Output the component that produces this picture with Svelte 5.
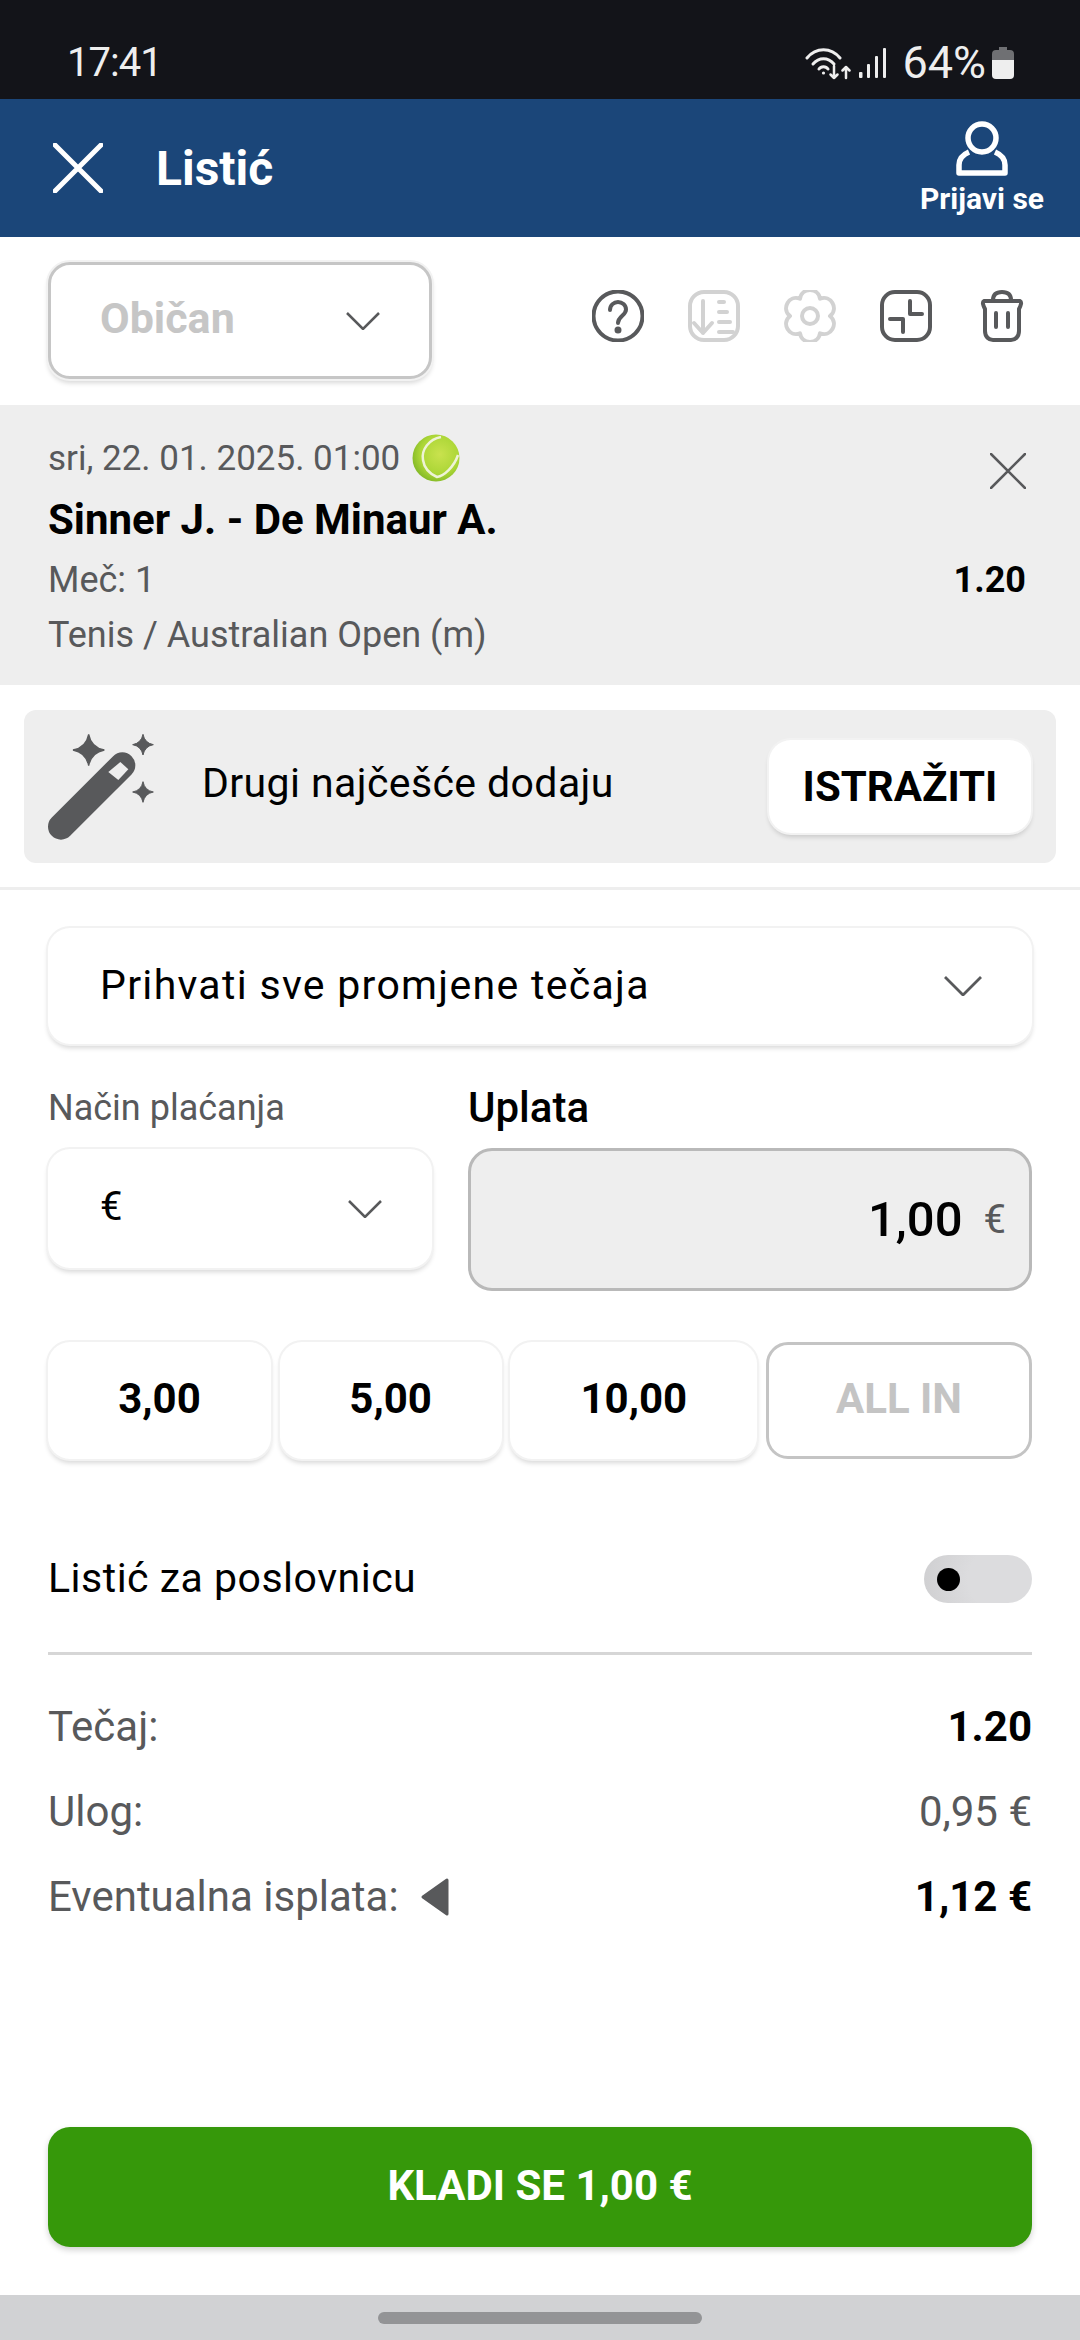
<script>
  const amounts = [
    { label: '3,00', width: 223 },
    { label: '5,00', width: 222 },
    { label: '10,00', width: 247 }
  ];

  // six soft lobes round the centre of a 52 box
  function gearPath(cx, cy, inner, outer) {
    const pt = (deg, r) => {
      const a = (deg * Math.PI) / 180;
      return (cx + r * Math.cos(a)).toFixed(1) + ' ' + (cy + r * Math.sin(a)).toFixed(1);
    };
    let d = 'M' + pt(0, inner);
    for (let i = 0; i < 6; i++) {
      const s = i * 60;
      d += ' C' + pt(s + 14, outer) + ' ' + pt(s + 46, outer) + ' ' + pt(s + 60, inner);
    }
    return d + 'Z';
  }
  const gear = gearPath(26, 26, 20, 30);

  function star(x, y, r) {
    const k = r * 0.16;
    return `M${x} ${y - r}Q${x + k} ${y - k} ${x + r} ${y}Q${x + k} ${y + k} ${x} ${y + r}Q${x - k} ${y + k} ${x - r} ${y}Q${x - k} ${y - k} ${x} ${y - r}Z`;
  }
</script>

<div class="screen">
  <div class="status">
    <span class="time">17:41</span>
    <div class="status-right">
      <svg class="wifi" width="46" height="34" viewBox="0 0 46 34" fill="none" stroke="#eee" stroke-width="3" stroke-linecap="round" stroke-linejoin="round">
        <path d="M2 12C11 1 26 1 35 12" />
        <path d="M8 18C14 11 23 11 29 18" />
        <path d="M14 23C16 20 21 20 23 23" />
        <circle cx="18.500" cy="27" r="1.600" fill="#eee" stroke="none" />
        <path d="M29 20V32M25.500 28.500L29 32L32.500 28.500" stroke-width="2.500" />
        <path d="M41 32V21M37.500 24.500L41 21L44.500 24.500" stroke-width="2.500" />
      </svg>
      <svg class="signal" width="28" height="30" viewBox="0 0 28 30" fill="#eee">
        <rect x="0" y="24" width="3.500" height="6" rx="1" />
        <rect x="8" y="16" width="3" height="14" rx="1" />
        <rect x="16" y="8" width="3" height="22" rx="1" />
        <rect x="24" y="0" width="3" height="30" rx="1" />
      </svg>
      <span class="battery-text">64%</span>
      <svg class="battery" width="22" height="32" viewBox="0 0 22 32">
        <path d="M7 0h8v3h3a4 4 0 0 1 4 4v6H0V7a4 4 0 0 1 4-4h3z" fill="#6f7073" />
        <path d="M0 13h22v15a4 4 0 0 1-4 4H4a4 4 0 0 1-4-4z" fill="#eee" />
      </svg>
    </div>
  </div>

  <header class="topbar">
    <svg class="close-main" width="50" height="50" viewBox="0 0 50 50" fill="none" stroke="#fff" stroke-width="5" stroke-linecap="round">
      <path d="M2 2L48 48M48 2L2 48" />
    </svg>
    <h1>Listić</h1>
    <div class="login">
      <svg width="54" height="56" viewBox="0 0 54 56" fill="none" stroke="#fff" stroke-width="5.500" stroke-linejoin="round">
        <circle cx="27" cy="17" r="14" />
        <path d="M14 31C7 34 4 39 4 44V52H50V44C50 39 47 34 40 31" />
      </svg>
      <span>Prijavi se</span>
    </div>
  </header>

  <div class="toolbar">
    <div class="select ticket-type">
      <span>Običan</span>
      <svg class="chev" width="34" height="18" viewBox="0 0 34 18" fill="none" stroke="#58595b" stroke-width="2.500"><path d="M1 1L17 17L33 1" /></svg>
    </div>
    <div class="tools">
      <svg width="52" height="52" viewBox="0 0 52 52" fill="none" stroke="#58595b" stroke-width="4" stroke-linecap="round">
        <circle cx="26" cy="26" r="24.500" />
        <path d="M18 20c0-5 4-8 8-8s8 3 8 7.500c0 6-8 6.500-8 13.500" />
        <circle cx="26" cy="40" r="1.500" fill="#58595b" />
      </svg>
      <svg width="52" height="52" viewBox="0 0 52 52" fill="none" stroke="#d2d2d2" stroke-width="4" stroke-linecap="round" stroke-linejoin="round">
        <rect x="2" y="2" width="48" height="48" rx="14" />
        <path d="M15 11V43M6 33L15 43L24 33" />
        <path d="M31 12H36M31 22H39M31 32H42M31 42H45" />
      </svg>
      <svg width="52" height="52" viewBox="0 0 52 52" fill="none" stroke="#d2d2d2" stroke-width="4" stroke-linejoin="round">
        <path d={gear} />
        <circle cx="26" cy="26" r="8" />
      </svg>
      <svg width="52" height="52" viewBox="0 0 52 52" fill="none" stroke="#58595b" stroke-width="4" stroke-linecap="round" stroke-linejoin="round">
        <rect x="2" y="2" width="48" height="48" rx="13" />
        <path d="M30 11V24H42M10 29H23V42" />
      </svg>
      <svg width="52" height="52" viewBox="-5 0 52 52" fill="none" stroke="#58595b" stroke-width="4" stroke-linecap="round" stroke-linejoin="round">
        <path d="M3 11H39C41 12 40 15 38 19V41C38 47 34 50 30 50H12C8 50 4 47 4 41V19C2 15 1 12 3 11Z" />
        <path d="M12 10C12 4 16 2 21 2S30 4 30 10" />
        <path d="M15 23V37M27 23V37" />
      </svg>
    </div>
  </div>

  <section class="bet">
    <div class="bet-date">
      <span>sri, 22. 01. 2025. 01:00</span>
      <svg width="48" height="48" viewBox="0 0 48 48">
        <defs>
          <radialGradient id="ball" cx="0.58" cy="0.42" r="0.6">
            <stop offset="0" stop-color="#c9e24e" />
            <stop offset="0.7" stop-color="#abd636" />
            <stop offset="1" stop-color="#86bb28" />
          </radialGradient>
        </defs>
        <circle cx="24" cy="24" r="23.500" fill="url(#ball)" />
        <path d="M29 3C17 5 9 16 11 26C12 33 16 39 25 43C32 42 42 33 46 21" fill="none" stroke="#eef3d6" stroke-width="2.500" />
      </svg>
    </div>
    <div class="bet-title">Sinner J. - De Minaur A.</div>
    <div class="bet-line">
      <span>Meč: 1</span>
      <b>1.20</b>
    </div>
    <div class="bet-league">Tenis / Australian Open (m)</div>
    <svg class="bet-close" width="36" height="36" viewBox="0 0 36 36" fill="none" stroke="#58595b" stroke-width="2.500" stroke-linecap="round">
      <path d="M1 1L35 35M35 1L1 35" />
    </svg>
  </section>

  <section class="suggest">
    <svg width="106" height="106" viewBox="83 100 318 318">
      <path d={star(205, 148, 47)} fill="#58595b" stroke="#58595b" stroke-width="4" />
      <path d={star(368, 132, 31)} fill="#58595b" stroke="#58595b" stroke-width="3" />
      <path d={star(368, 274, 31)} fill="#58595b" stroke="#58595b" stroke-width="3" />
      <path d="M122 378L306 194" stroke="#58595b" stroke-width="78" stroke-linecap="round" />
      <path d="M264 214L300 184L324 206L294 238Z" fill="#eee" />
    </svg>
    <span class="suggest-text">Drugi najčešće dodaju</span>
    <button class="explore">ISTRAŽITI</button>
  </section>

  <div class="divider"></div>

  <div class="select accept">
    <span>Prihvati sve promjene tečaja</span>
    <svg class="chev" width="38" height="20" viewBox="0 0 38 20" fill="none" stroke="#58595b" stroke-width="2.800"><path d="M1 1L19 19L37 1" /></svg>
  </div>

  <div class="pay">
    <div class="pay-left">
      <div class="pay-label">Način plaćanja</div>
      <div class="select currency">
        <span>€</span>
        <svg class="chev" width="34" height="18" viewBox="0 0 34 18" fill="none" stroke="#58595b" stroke-width="2.500"><path d="M1 1L17 17L33 1" /></svg>
      </div>
    </div>
    <div class="pay-right">
      <div class="pay-label strong">Uplata</div>
      <div class="amount">
        <span class="amount-value">1,00</span>
        <span class="amount-unit">€</span>
      </div>
    </div>
  </div>

  <div class="quick">
    {#each amounts as a}
      <button class="quick-btn" style="width: {a.width}px">{a.label}</button>
    {/each}
    <button class="quick-btn all-in">ALL IN</button>
  </div>

  <div class="shop">
    <span>Listić za poslovnicu</span>
    <div class="toggle"><i></i></div>
  </div>

  <div class="totals">
    <div class="total-row">
      <span>Tečaj:</span>
      <b>1.20</b>
    </div>
    <div class="total-row">
      <span>Ulog:</span>
      <span>0,95 €</span>
    </div>
    <div class="total-row">
      <span class="payout">Eventualna isplata:
        <svg width="28" height="38" viewBox="0 0 28 38" fill="#58595b" stroke="#58595b" stroke-width="3" stroke-linejoin="round"><path d="M26 2V36L2 19Z" /></svg>
      </span>
      <b>1,12 €</b>
    </div>
  </div>

  <button class="place">KLADI SE 1,00 €</button>

  <div class="navbar"><i></i></div>
</div>

<style>
  :global(body) {
    margin: 0;
    background: #fff;
  }

  .screen {
    width: 1080px;
    height: 2340px;
    display: flex;
    flex-direction: column;
    font-family: Roboto, "Liberation Sans", sans-serif;
    color: #000;
    background: #fff;
    overflow: hidden;
  }

  /* status bar */
  .status {
    height: 99px;
    flex: none;
    box-sizing: border-box;
    padding: 41px 66px 0 67px;
    display: flex;
    justify-content: space-between;
    align-items: flex-start;
    background: #131419;
    color: #eee;
    font-size: 40px;
    line-height: 44px;
  }

  .time { letter-spacing: -1px; }

  .status-right {
    display: flex;
    align-items: center;
  }

  .wifi { margin: 0 8px 0 0; }
  .signal { margin-right: 15px; }

  .battery-text {
    margin-right: 6px;
    font-size: 45px;
  }

  /* header */
  .topbar {
    height: 138px;
    flex: none;
    box-sizing: border-box;
    padding: 0 36px 0 53px;
    display: flex;
    align-items: center;
    background: #1b4679;
    color: #fff;
  }

  .close-main { margin-right: 53px; }

  h1 {
    margin: 0;
    flex: 1;
    font-size: 48px;
    font-weight: 700;
  }

  .login {
    display: flex;
    flex-direction: column;
    align-items: center;
    font-size: 30px;
    line-height: 34px;
    font-weight: 700;
    gap: 5px;
  }

  /* shared dropdown */
  .select {
    box-sizing: border-box;
    display: flex;
    align-items: center;
    justify-content: space-between;
    background: #fff;
    border-radius: 22px;
    box-shadow: 0 0 0 2px #f2f2f2, 0 4px 5px rgba(0, 0, 0, 0.16);
  }

  .toolbar {
    height: 168px;
    flex: none;
    box-sizing: border-box;
    padding: 25px 52px 0 48px;
    display: flex;
    justify-content: space-between;
    align-items: flex-start;
  }

  .ticket-type {
    width: 384px;
    height: 117px;
    padding: 0 49px 0 49px;
    border: 3px solid #c6c6c6;
    color: #c6c6c6;
    font-size: 43px;
    font-weight: 700;
  }

  .ticket-type span { margin-bottom: 6px; }

  .tools {
    display: flex;
    align-items: center;
    gap: 44px;
    padding-top: 28px;
  }

  /* bet card */
  .bet {
    position: relative;
    height: 280px;
    flex: none;
    box-sizing: border-box;
    padding: 27px 54px 0 48px;
    background: #eee;
    color: #58595b;
    font-size: 36px;
  }

  .bet-date {
    height: 52px;
    display: flex;
    align-items: center;
    gap: 12px;
    font-size: 35px;
  }

  .bet-title {
    height: 60px;
    margin-top: 6px;
    line-height: 60px;
    font-size: 42px;
    font-weight: 700;
    color: #000;
  }

  .bet-line {
    height: 59px;
    display: flex;
    align-items: center;
    justify-content: space-between;
  }

  .bet-line b {
    color: #000;
    font-size: 36px;
  }

  .bet-league {
    height: 52px;
    line-height: 52px;
  }

  .bet-close {
    position: absolute;
    top: 48px;
    right: 54px;
  }

  /* suggestion */
  .suggest {
    height: 153px;
    flex: none;
    box-sizing: border-box;
    margin: 25px 24px 24px 24px;
    padding: 0 25px 0 24px;
    display: flex;
    align-items: center;
    background: #eee;
    border-radius: 12px;
  }

  .suggest-text {
    flex: 1;
    margin: 0 0 8px 48px;
    font-size: 41px;
    letter-spacing: 0.4px;
  }

  .explore {
    width: 262px;
    height: 93px;
    padding: 0;
    border: none;
    border-radius: 22px;
    background: #fff;
    font: 700 42px Roboto, sans-serif;
    color: #000;
    box-shadow: 0 0 0 2px #f2f2f2, 0 4px 5px rgba(0, 0, 0, 0.16);
  }

  .divider {
    height: 3px;
    flex: none;
    background: #eee;
  }

  .accept {
    flex: none;
    width: 984px;
    height: 116px;
    margin: 38px 0 0 48px;
    padding: 0 50px 0 52px;
    font-size: 41px;
    letter-spacing: 1.3px;
  }

  .accept span { margin-bottom: 3px; }

  /* payment */
  .pay {
    flex: none;
    margin: 31px 48px 0 48px;
    display: flex;
    justify-content: space-between;
    align-items: flex-start;
    height: 217px;
  }

  .pay-left { width: 384px; }
  .pay-right { width: 564px; }

  .pay-label {
    height: 73px;
    line-height: 66px;
    font-size: 36px;
    color: #58595b;
  }

  .pay-label.strong {
    font-size: 42px;
    font-weight: 500;
    color: #000;
  }

  .currency {
    height: 119px;
    margin-top: 1px;
    padding: 0 50px 0 52px;
    font-size: 40px;
  }

  .currency span { margin-bottom: 5px; }

  .amount {
    box-sizing: border-box;
    height: 143px;
    padding: 0 23px;
    display: flex;
    justify-content: flex-end;
    align-items: center;
    gap: 21px;
    background: #eee;
    border: 3px solid #b9b9b9;
    border-radius: 24px;
  }

  .amount-value { font-size: 49px; font-weight: 500; }
  .amount-unit { font-size: 40px; color: #58595b; }

  .quick {
    flex: none;
    margin: 50px 48px 0 48px;
    display: flex;
    justify-content: space-between;
  }

  .quick-btn {
    box-sizing: border-box;
    height: 117px;
    padding: 0 0 4px;
    border: none;
    border-radius: 22px;
    background: #fff;
    font: 700 42px Roboto, sans-serif;
    color: #000;
    box-shadow: 0 0 0 2px #f2f2f2, 0 4px 5px rgba(0, 0, 0, 0.16);
  }

  .all-in {
    width: 266px;
    border: 3px solid #c4c4c4;
    color: #c4c4c4;
    box-shadow: none;
  }

  .shop {
    flex: none;
    margin: 95px 48px 0 48px;
    height: 48px;
    display: flex;
    align-items: center;
    justify-content: space-between;
    font-size: 41px;
    letter-spacing: 0.5px;
  }

  .toggle {
    width: 108px;
    height: 48px;
    margin-top: 2px;
    box-sizing: border-box;
    padding: 0 13px 0 13px;
    display: flex;
    align-items: center;
    border-radius: 24px;
    background: radial-gradient(circle at 70% 50%, #dcdcde 40%, #cfcfd1);
  }

  .toggle i {
    width: 23px;
    height: 23px;
    border-radius: 50%;
    background: #000;
  }

  .totals {
    flex: none;
    margin: 50px 48px 0 48px;
    padding-top: 29px;
    border-top: 3px solid #d6d6d6;
    color: #58595b;
    font-size: 42px;
  }

  .total-row {
    height: 85px;
    display: flex;
    align-items: center;
    justify-content: space-between;
  }

  .total-row b {
    color: #000;
    font-size: 42px;
  }

  .payout {
    display: flex;
    align-items: center;
    gap: 22px;
  }

  .place {
    flex: none;
    width: 984px;
    height: 120px;
    margin: 188px 0 0 48px;
    padding: 0 0 3px;
    border: none;
    border-radius: 22px;
    background: #36980a;
    color: #fff;
    font: 700 42px Roboto, sans-serif;
    box-shadow: 0 3px 6px rgba(0, 0, 0, 0.18);
  }

  .navbar {
    margin-top: auto;
    height: 45px;
    flex: none;
    display: flex;
    justify-content: center;
    padding-top: 17px;
    box-sizing: border-box;
    background: #d1d2d4;
  }

  .navbar i {
    width: 324px;
    height: 12px;
    border-radius: 6px;
    background: #939496;
  }
</style>
